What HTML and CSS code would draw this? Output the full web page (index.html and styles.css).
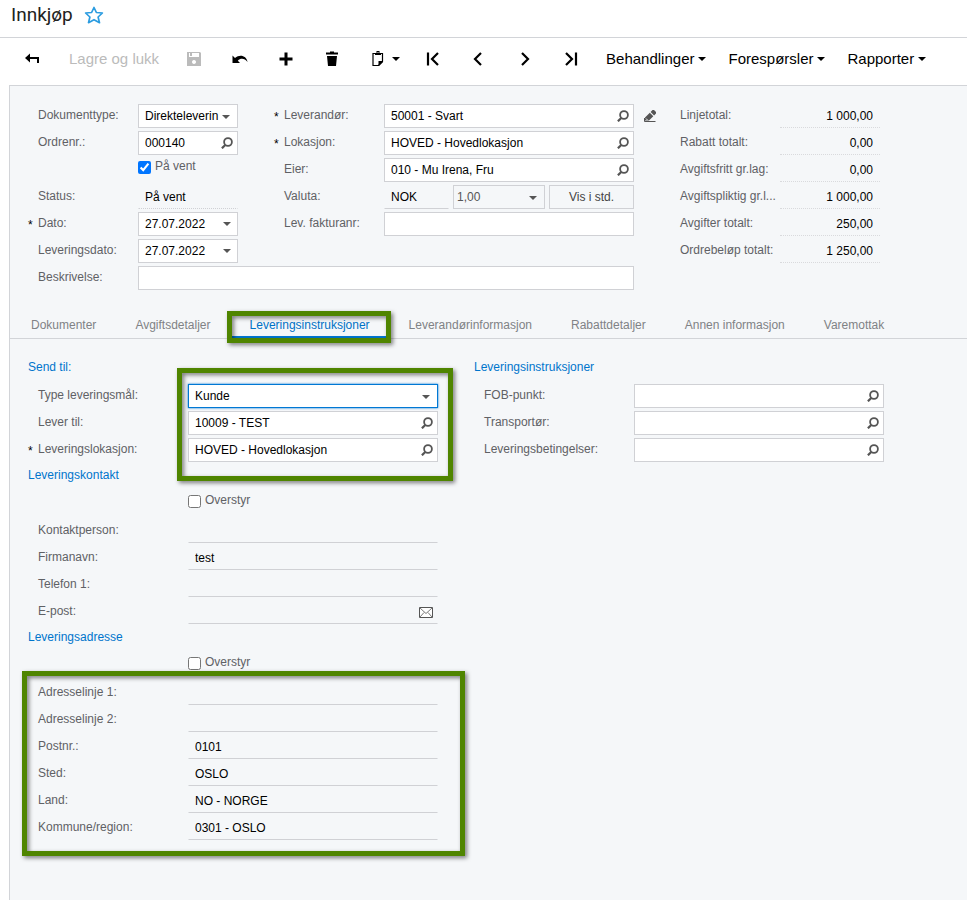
FILE: index.html
```html
<!DOCTYPE html>
<html lang="nb">
<head>
<meta charset="utf-8">
<title>Innkjøp</title>
<link rel="stylesheet" href="styles.css">
</head>
<body>
<svg class="sprite" aria-hidden="true">
  <symbol id="caret" viewBox="0 0 8 4"><path d="M0 0h8L4 4z" fill="currentColor"/></symbol>
  <symbol id="search" viewBox="0 0 12 12"><circle cx="7" cy="5" r="3.9" fill="none" stroke="currentColor" stroke-width="1.8"/><path d="M4.200 8L.9 11.300" stroke="currentColor" stroke-width="2.2"/></symbol>
</svg>

<header class="page-header">
  <h1>Innkjøp</h1>
  <button class="star" aria-label="Favoritt"><svg width="20" height="18" viewBox="0 0 20 18"><path d="M10 1.500l2.400 5 6 .5-4.300 4 1.400 5.700L10 13.700l-5.500 3L5.900 11 1.600 7l6-.5z" fill="none" stroke="#2b9ce0" stroke-width="1.700" stroke-linejoin="round"/></svg></button>
</header>

<nav class="toolbar" aria-label="Verktøylinje">
  <button class="tool" aria-label="Tilbake"><svg width="16" height="14" viewBox="0 0 16 14"><path d="M3 6h11v5" fill="none" stroke="currentColor" stroke-width="2"/><path d="M6 1.500v9L1 6z" fill="currentColor"/></svg></button>
  <button class="tool-text" disabled>Lagre og lukk</button>
  <button class="tool" aria-label="Lagre" disabled><svg width="14" height="14" viewBox="0 0 14 14"><path fill-rule="evenodd" fill="currentColor" d="M0 0h13l1 1v13H0zM2 1v4h10V1H5v3H3V1zM7 8a2 2 0 1 0 .01 0z"/></svg></button>
  <button class="tool" aria-label="Angre"><svg width="16" height="14" viewBox="0 0 16 14"><path d="M.5 3.500V11H8L5.800 8.700C8.500 6 12.500 6 15.500 10 14.500 3.800 8 1.800 3 6z" fill="currentColor"/></svg></button>
  <button class="tool" aria-label="Ny"><svg width="14" height="14" viewBox="0 0 14 14"><path d="M7 .5v13M.5 7h13" stroke="currentColor" stroke-width="3"/></svg></button>
  <button class="tool" aria-label="Slett"><svg width="12" height="16" viewBox="0 0 12 16"><path d="M0 1.500h4V.5h4v1h4V3.500H0zM1 5h10l-1 10H2z" fill="currentColor"/></svg></button>
  <button class="tool-menu" aria-label="Utklippstavle"><svg width="12" height="16" viewBox="0 0 12 16"><path d="M3 2.500H1v12h5.500l4-4v-8H9" fill="none" stroke="currentColor" stroke-width="1.200"/><path d="M3 2h1.500V0h3v2H9v2H3zM6.500 15V10H11v1l-4 4z" fill="currentColor"/><path d="M5.500 1h1v1h-1z" fill="#fff"/></svg><svg width="8" height="4"><use href="#caret"/></svg></button>
  <button class="tool" aria-label="Første"><svg width="14" height="14" viewBox="0 0 14 14"><path d="M2 .5v13M12 1L6 7l6 6" fill="none" stroke="currentColor" stroke-width="2.200"/></svg></button>
  <button class="tool" aria-label="Forrige"><svg width="14" height="14" viewBox="0 0 14 14"><path d="M9 1L3 7l6 6" fill="none" stroke="currentColor" stroke-width="2.200"/></svg></button>
  <button class="tool" aria-label="Neste"><svg width="14" height="14" viewBox="0 0 14 14"><path d="M4 1l6 6-6 6" fill="none" stroke="currentColor" stroke-width="2.200"/></svg></button>
  <button class="tool" aria-label="Siste"><svg width="14" height="14" viewBox="0 0 14 14"><path d="M12 .5v13M2 1l6 6-6 6" fill="none" stroke="currentColor" stroke-width="2.200"/></svg></button>
  <button class="menu">Behandlinger<svg width="8" height="4"><use href="#caret"/></svg></button>
  <button class="menu">Forespørsler<svg width="8" height="4"><use href="#caret"/></svg></button>
  <button class="menu">Rapporter<svg width="8" height="4"><use href="#caret"/></svg></button>
</nav>

<main class="panel">
  <section class="summary">
    <div class="stack">
      <div class="row"><label for="type">Dokumenttype:</label><div class="field"><select id="type"><option>Direkteleverin</option></select><svg class="arrow" width="8" height="4"><use href="#caret"/></svg></div></div>
      <div class="row"><label for="ordre">Ordrenr.:</label><div class="field"><input id="ordre" type="text" value="000140"><button class="lookup" aria-label="Søk"><svg width="12" height="12"><use href="#search"/></svg></button></div></div>
      <div class="row"><div class="check"><input id="vent" type="checkbox" checked><label for="vent">På vent</label></div></div>
      <div class="row"><label for="status">Status:</label><div class="field plain dotted"><input id="status" type="text" value="På vent" readonly></div></div>
      <div class="row"><label class="required" for="dato">Dato:</label><div class="field"><input id="dato" type="text" value="27.07.2022"><button class="lookup" aria-label="Velg dato"><svg width="8" height="4"><use href="#caret"/></svg></button></div></div>
      <div class="row"><label for="levdato">Leveringsdato:</label><div class="field"><input id="levdato" type="text" value="27.07.2022"><button class="lookup" aria-label="Velg dato"><svg width="8" height="4"><use href="#caret"/></svg></button></div></div>
    </div>
    <div class="stack">
      <div class="row"><label class="required" for="lev">Leverandør:</label><div class="field"><input id="lev" type="text" value="50001 - Svart"><button class="lookup" aria-label="Søk"><svg width="12" height="12"><use href="#search"/></svg></button></div></div>
      <div class="row"><label class="required" for="lok">Lokasjon:</label><div class="field"><input id="lok" type="text" value="HOVED - Hovedlokasjon"><button class="lookup" aria-label="Søk"><svg width="12" height="12"><use href="#search"/></svg></button></div></div>
      <div class="row"><label for="eier">Eier:</label><div class="field"><input id="eier" type="text" value="010 - Mu Irena, Fru"><button class="lookup" aria-label="Søk"><svg width="12" height="12"><use href="#search"/></svg></button></div></div>
      <div class="row"><label for="valuta">Valuta:</label><div class="currency"><div class="field plain"><input id="valuta" type="text" value="NOK" readonly></div><div class="field muted"><select aria-label="Kurs"><option>1,00</option></select><svg class="arrow" width="8" height="4"><use href="#caret"/></svg></div><button class="view">Vis i std.</button></div></div>
      <div class="row"><label for="faktura">Lev. fakturanr:</label><div class="field"><input id="faktura" type="text"></div></div>
    </div>
    <button class="edit" aria-label="Rediger leverandør"><svg width="12" height="12" viewBox="0 0 12 12"><path d="M1 7.500L5.800 2.700l3.500 3.500L5 10.500H1zM6.600 1.900L8.500 0H10l2 2v1.500l-1.900 1.900z" fill="currentColor"/><path d="M.5 8v3.500H11.500" fill="none" stroke="currentColor"/><path d="M2 8.500l1.500 1.500" stroke="#f5f7f9"/></svg></button>
    <div class="stack totals">
      <div class="row"><label for="t1">Linjetotal:</label><output id="t1">1 000,00</output></div>
      <div class="row"><label for="t2">Rabatt totalt:</label><output id="t2">0,00</output></div>
      <div class="row"><label for="t3">Avgiftsfritt gr.lag:</label><output id="t3">0,00</output></div>
      <div class="row"><label for="t4">Avgiftspliktig gr.l...</label><output id="t4">1 000,00</output></div>
      <div class="row"><label for="t5">Avgifter totalt:</label><output id="t5">250,00</output></div>
      <div class="row"><label for="t6">Ordrebeløp totalt:</label><output id="t6">1 250,00</output></div>
    </div>
    <div class="row description"><label for="besk">Beskrivelse:</label><div class="field"><input id="besk" type="text"></div></div>
  </section>

  <div class="tabs" role="tablist">
    <button role="tab">Dokumenter</button>
    <button role="tab">Avgiftsdetaljer</button>
    <button role="tab" class="active" aria-selected="true">Leveringsinstruksjoner<span class="mark mark-tab"></span></button>
    <button role="tab">Leverandørinformasjon</button>
    <button role="tab">Rabattdetaljer</button>
    <button role="tab">Annen informasjon</button>
    <button role="tab">Varemottak</button>
  </div>

  <section class="details">
    <div class="stack wide">
      <h2>Send til:</h2>
      <div class="stack group">
        <div class="row"><label for="mal">Type leveringsmål:</label><div class="field focused"><select id="mal"><option>Kunde</option></select><svg class="arrow" width="8" height="4"><use href="#caret"/></svg></div></div>
        <div class="row"><label for="til">Lever til:</label><div class="field"><input id="til" type="text" value="10009 - TEST"><button class="lookup" aria-label="Søk"><svg width="12" height="12"><use href="#search"/></svg></button></div></div>
        <div class="row"><label class="required" for="levlok">Leveringslokasjon:</label><div class="field"><input id="levlok" type="text" value="HOVED - Hovedlokasjon"><button class="lookup" aria-label="Søk"><svg width="12" height="12"><use href="#search"/></svg></button></div></div>
        <span class="mark mark-fields"></span>
      </div>
      <h2>Leveringskontakt</h2>
      <div class="row"><div class="check"><input id="over1" type="checkbox"><label for="over1">Overstyr</label></div></div>
      <div class="row"><label for="kontakt">Kontaktperson:</label><div class="field plain"><input id="kontakt" type="text" readonly></div></div>
      <div class="row"><label for="firma">Firmanavn:</label><div class="field plain"><input id="firma" type="text" value="test" readonly></div></div>
      <div class="row"><label for="tlf">Telefon 1:</label><div class="field plain"><input id="tlf" type="text" readonly></div></div>
      <div class="row"><label for="epost">E-post:</label><div class="field plain"><input id="epost" type="text" readonly><button class="lookup" aria-label="Send e-post"><svg width="14" height="11" viewBox="0 0 14 11"><path d="M.5.5h13v10H.5z" fill="#fff" stroke="currentColor"/><path d="M1 1l6 5.500L13 1M1 10l4-4.500M13 10L9 5.500" fill="none" stroke="currentColor" stroke-width=".8"/></svg></button></div></div>
      <h2>Leveringsadresse</h2>
      <div class="row"><div class="check"><input id="over2" type="checkbox"><label for="over2">Overstyr</label></div></div>
      <div class="stack group">
        <div class="row"><label for="a1">Adresselinje 1:</label><div class="field plain"><input id="a1" type="text" readonly></div></div>
        <div class="row"><label for="a2">Adresselinje 2:</label><div class="field plain"><input id="a2" type="text" readonly></div></div>
        <div class="row"><label for="post">Postnr.:</label><div class="field plain"><input id="post" type="text" value="0101" readonly></div></div>
        <div class="row"><label for="sted">Sted:</label><div class="field plain"><input id="sted" type="text" value="OSLO" readonly></div></div>
        <div class="row"><label for="land">Land:</label><div class="field plain"><input id="land" type="text" value="NO - NORGE" readonly></div></div>
        <div class="row"><label for="kommune">Kommune/region:</label><div class="field plain"><input id="kommune" type="text" value="0301 - OSLO" readonly></div></div>
        <span class="mark mark-address"></span>
      </div>
    </div>
    <div class="stack wide">
      <h2>Leveringsinstruksjoner</h2>
      <div class="row"><label for="fob">FOB-punkt:</label><div class="field"><input id="fob" type="text"><button class="lookup" aria-label="Søk"><svg width="12" height="12"><use href="#search"/></svg></button></div></div>
      <div class="row"><label for="trans">Transportør:</label><div class="field"><input id="trans" type="text"><button class="lookup" aria-label="Søk"><svg width="12" height="12"><use href="#search"/></svg></button></div></div>
      <div class="row"><label for="beting">Leveringsbetingelser:</label><div class="field"><input id="beting" type="text"><button class="lookup" aria-label="Søk"><svg width="12" height="12"><use href="#search"/></svg></button></div></div>
    </div>
  </section>
</main>
</body>
</html>
```
FILE: styles.css
```css
* { box-sizing: border-box; }

body {
  margin: 0;
  min-height: 100vh;
  display: flex;
  flex-direction: column;
  background: #fff;
  color: #000;
  font: 12px/16px "Liberation Sans", Arial, sans-serif;
}

button, input, select { font: inherit; color: inherit; }
button { margin: 0; padding: 0; border: 0; background: none; }
svg { display: block; flex: none; }
.sprite { position: absolute; width: 0; height: 0; }

.page-header {
  display: flex;
  align-items: center;
  gap: 11px;
  height: 38px;
  padding: 0 11px 7px;
  border-bottom: 1px solid #d2d4d8;
}
h1 { margin: 0; font: 400 19px/24px Roboto, sans-serif; color: #222; }

.toolbar {
  display: flex;
  height: 47px;
  padding-left: 9px;
  padding-bottom: 5px;
  font-size: 15px;
}
.toolbar button { display: flex; align-items: center; flex: none; white-space: nowrap; }
.toolbar button:disabled { color: #bbb; }
.tool { width: 46px; justify-content: center; }
.tool-text { padding: 0 12px 0 14px; }
.tool-menu { gap: 8px; padding: 0 10px 0 17px; }
.menu { gap: 4px; padding: 0 10px 0 12px; }

.panel {
  flex: 1;
  margin-left: 9px;
  border: 1px solid #d2d4d8;
  border-width: 1px 0 0 1px;
  background: #f5f7f9;
}

.summary {
  display: grid;
  grid-template-columns: 210px minmax(0, 360px) 12px 210px;
  column-gap: 36px;
  row-gap: 3px;
  padding: 18px 18px 0;
}
.summary .edit { margin: 6px 0 0 -26px; height: 12px; color: #555; }
.totals { margin-left: -48px; width: 210px; }
.description { grid-column: 1 / 3; }

.stack { display: flex; flex-direction: column; gap: 3px; }
.row {
  display: grid;
  grid-template-columns: 110px minmax(0, 1fr);
  height: 24px;
}
.wide .row { grid-template-columns: 160px minmax(0, 1fr); }

.row > label {
  display: block;
  position: relative;
  padding: 3px 0 0 10px;
  white-space: nowrap;
  color: #5f6165;
}
.required::before {
  content: "*";
  position: absolute;
  left: 0;
  top: 5px;
  color: #000;
}

.field {
  position: relative;
  display: flex;
  border: 1px solid #d0d1d5;
  background: #fff;
}
.field input, .field select {
  appearance: none;
  flex: 1;
  min-width: 0;
  width: 100%;
  margin: 0;
  padding: 0 0 0 6px;
  border: 0;
  outline: 0;
  border-radius: 0;
  background: none;
}
.field select { padding-right: 18px; }
.arrow { position: absolute; right: 7px; top: 10px; color: #555; pointer-events: none; }
.lookup {
  display: flex;
  align-items: center;
  justify-content: center;
  width: 20px;
  color: #555;
}
.field.plain {
  border-color: transparent transparent #d0d1d5;
  background: none;
}
.field.plain .lookup { width: 22px; }
.field.dotted { border-bottom-style: dotted; }
.field.muted { background: none; color: #555; }
.field.muted select { padding-left: 3px; }
.field.focused { border-color: #0078d4; box-shadow: 0 0 2px #0078d4; }

.currency {
  display: grid;
  grid-template-columns: 65px minmax(0, 92px) 85px;
  gap: 4px;
}
.view { border: 1px solid #d0d1d5; color: #444; }

.check { grid-column: 2; display: flex; align-items: flex-start; gap: 4px; color: #5f6165; }
.check input { width: 13px; height: 13px; margin: 3px 0 0; }

output {
  padding: 4px 7px 0 0;
  border-bottom: 1px dotted #d9dadd;
  text-align: right;
}

.tabs {
  display: flex;
  gap: 1px;
  margin-top: 21px;
  padding-left: 2px;
  border-bottom: 1px solid #d2d4d8;
}
.tabs button {
  position: relative;
  height: 27px;
  padding: 2px 19px 0;
  border-bottom: 2px solid transparent;
  white-space: nowrap;
  color: #808285;
}
.tabs .active { border-bottom-color: #0078d4; color: #0072c6; }

.details {
  display: grid;
  grid-template-columns: repeat(2, minmax(0, 410px));
  column-gap: 36px;
  padding: 18px 18px 24px;
}
h2 {
  margin: 0;
  height: 24px;
  padding-top: 2px;
  font: inherit;
  color: #0075cc;
}

.group { position: relative; }
.mark {
  position: absolute;
  border: 5px solid #4f8500;
  filter: drop-shadow(2px 2px 2px rgba(0, 0, 0, 0.5));
  pointer-events: none;
}
.mark-tab { inset: 0 -2px -7px -4px; }
.mark-fields { inset: -16px -15px -19px 149px; }
.mark-address { inset: -10px -27px -16px -6px; }
```
